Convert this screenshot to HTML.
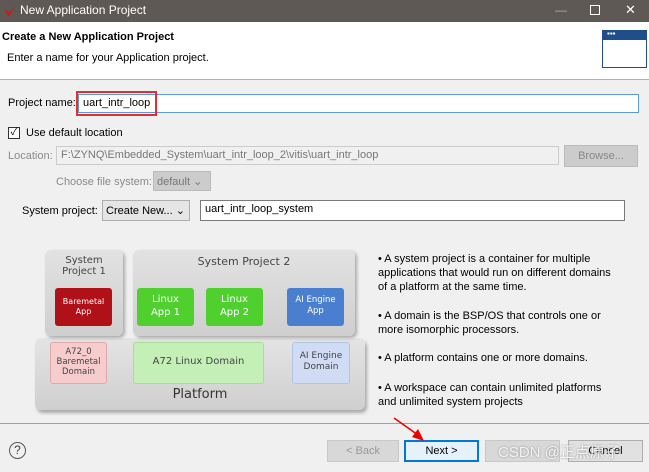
<!DOCTYPE html>
<html><head><meta charset="utf-8"><style>
*{box-sizing:border-box;margin:0;padding:0}
body{width:649px;height:472px;position:relative;overflow:hidden;background:#f0f0f0;font-family:"Liberation Sans","Noto Sans CJK SC",sans-serif;font-size:11px;color:#000}
.a{position:absolute}
.inp{position:absolute;background:#fff;border:1px solid #7a7a7a;height:19px;padding:2px 4px;font-size:11px}
.box{position:absolute;border-radius:6px;text-align:center;font-family:"DejaVu Sans",sans-serif}
.btn{position:absolute;border:1px solid #adadad;background:#e1e1e1;text-align:center;line-height:20px;height:22px}
</style></head><body>
<div class="a" style="left:0;top:0;width:649px;height:22px;background:#5e5954"></div>
<svg class="a" style="left:3px;top:4px" width="14" height="14"><path d="M1 5 L6 13 L13 1 L7 8 Z" fill="#c81d1d"/></svg>
<div class="a" style="left:20px;top:3px;color:#fff;font-size:12px">New Application Project</div>
<div class="a" style="left:555px;top:3px;color:#aaa;font-size:12px">—</div>
<div class="a" style="left:590px;top:5px;width:10px;height:10px;border:1px solid #fff"></div>
<div class="a" style="left:625px;top:2px;color:#fff;font-size:13px">✕</div>
<div class="a" style="left:0;top:22px;width:649px;height:58px;background:#fff;border-bottom:1px solid #b0b0b0"></div>
<div class="a" style="left:2px;top:31px;font-weight:bold;font-size:11px">Create a New Application Project</div>
<div class="a" style="left:7px;top:52px">Enter a name for your Application project.</div>
<div class="a" style="left:602px;top:30px;width:45px;height:38px;border:1px solid #1f4e8a;background:#fff"><div style="height:9px;background:#1f4e8a;color:#fff;font-size:8px;line-height:5px;padding-left:4px">▪▪▪</div></div>
<div class="a" style="left:8px;top:97px">Project name:</div>
<div class="inp" style="left:78px;top:94px;width:561px;border-color:#5a9ad8">uart_intr_loop</div>
<div class="a" style="left:76px;top:91px;width:81px;height:25px;border:2px solid #e03030"></div>
<div class="a" style="left:8px;top:127px;width:12px;height:12px;border:1px solid #333;background:#fff;font-size:10px;line-height:10px;text-align:center">✓</div>
<div class="a" style="left:26px;top:127px">Use default location</div>
<div class="a" style="left:8px;top:150px;color:#8a8a8a">Location:</div>
<div class="inp" style="left:56px;top:146px;width:503px;background:#f0f0f0;border-color:#ccc;color:#777">F:\ZYNQ\Embedded_System\uart_intr_loop_2\vitis\uart_intr_loop</div>
<div class="btn" style="left:564px;top:145px;width:74px;background:#ccc;border-color:#bbb;color:#888">Browse...</div>
<div class="a" style="left:56px;top:176px;color:#8a8a8a">Choose file system:</div>
<div class="a" style="left:153px;top:171px;width:58px;height:20px;background:#ccc;border:1px solid #bbb;color:#777;padding:3px 3px">default ⌄</div>
<div class="a" style="left:22px;top:205px">System project:</div>
<div class="a" style="left:102px;top:200px;width:88px;height:21px;background:#e5e5e5;border:1px solid #adadad;padding:3px 3px">Create New... ⌄</div>
<div class="inp" style="left:200px;top:200px;width:425px;height:21px">uart_intr_loop_system</div>
<div class="box" style="left:35px;top:338px;width:330px;height:72px;background:linear-gradient(#e4e4e4,#cfcfcf);box-shadow:2px 3px 3px #aaa"></div>
<div class="box" style="left:45px;top:250px;width:78px;height:86px;background:linear-gradient(#e2e2e2,#cfcfcf);box-shadow:2px 2px 3px #aaa;color:#444;font-size:10px;padding-top:5px;line-height:11px">System<br>Project 1</div>
<div class="box" style="left:133px;top:250px;width:222px;height:86px;background:linear-gradient(#e2e2e2,#cfcfcf);box-shadow:2px 2px 3px #aaa;color:#444;font-size:11px;padding-top:5px">System Project 2</div>
<div class="box" style="left:55px;top:288px;width:57px;height:38px;background:#b01018;color:#fff;font-size:8px;padding-top:9px;line-height:10px;border-radius:3px">Baremetal<br>App</div>
<div class="box" style="left:137px;top:288px;width:57px;height:38px;background:#4fd02e;color:#fff;font-size:10px;padding-top:5px;line-height:13px;border-radius:3px">Linux<br>App 1</div>
<div class="box" style="left:206px;top:288px;width:57px;height:38px;background:#4fd02e;color:#fff;font-size:10px;padding-top:5px;line-height:13px;border-radius:3px">Linux<br>App 2</div>
<div class="box" style="left:287px;top:288px;width:57px;height:38px;background:#4a7fd0;color:#fff;font-size:8.5px;padding-top:7px;line-height:11px;border-radius:3px">AI Engine<br>App</div>
<div class="box" style="left:50px;top:342px;width:57px;height:42px;background:#f6cccc;border:1px solid #e0a8a8;color:#444;font-size:8.5px;padding-top:4px;line-height:10px;border-radius:3px">A72_0<br>Baremetal<br>Domain</div>
<div class="box" style="left:133px;top:342px;width:131px;height:42px;background:#c4f0b8;border:1px solid #a8dc98;color:#444;font-size:10px;padding-top:13px;border-radius:3px">A72 Linux Domain</div>
<div class="box" style="left:292px;top:342px;width:58px;height:42px;background:#cfdcf4;border:1px solid #b0c4e6;color:#444;font-size:9px;padding-top:8px;line-height:11px;border-radius:3px">AI Engine<br>Domain</div>
<div class="a" style="left:35px;top:387px;width:330px;text-align:center;font-family:'DejaVu Sans',sans-serif;font-size:13px;color:#333">Platform</div>
<div class="a" style="left:378px;top:252px;line-height:14px;white-space:nowrap">• A system project is a container for multiple<br>applications that would run on different domains<br>of a platform at the same time.</div>
<div class="a" style="left:378px;top:309px;line-height:14px;white-space:nowrap">• A domain is the BSP/OS that controls one or<br>more isomorphic processors.</div>
<div class="a" style="left:378px;top:352px">• A platform contains one or more domains.</div>
<div class="a" style="left:378px;top:381px;line-height:14px;white-space:nowrap">• A workspace can contain unlimited platforms<br>and unlimited system projects</div>
<div class="a" style="left:0;top:423px;width:649px;height:1px;background:#a0a0a0"></div>
<div class="a" style="left:9px;top:442px;width:17px;height:17px;border:1.5px solid #555;border-radius:50%;text-align:center;font-size:12px;line-height:14px;color:#444">?</div>
<div class="btn" style="left:327px;top:440px;width:72px;background:#d8d8d8;border-color:#c8c8c8;color:#999">&lt; Back</div>
<div class="btn" style="left:404px;top:440px;width:75px;background:#e5f1fb;border:2px solid #0078d7;line-height:18px">Next &gt;</div>
<div class="btn" style="left:485px;top:440px;width:75px;background:#d8d8d8;border-color:#c8c8c8;color:#888"></div>
<div class="btn" style="left:568px;top:440px;width:75px">Cancel</div>
<div class="a" style="left:498px;top:441px;font-size:15px;color:rgba(255,255,255,.85);text-shadow:0 0 2px #888">CSDN @正点原子</div>
<svg class="a" style="left:390px;top:415px" width="40" height="30"><path d="M4 3 L28 20" stroke="#e00" stroke-width="1.5"/><path d="M22 22 L34 26 L28 14 Z" fill="#e00"/></svg>
</body></html>
